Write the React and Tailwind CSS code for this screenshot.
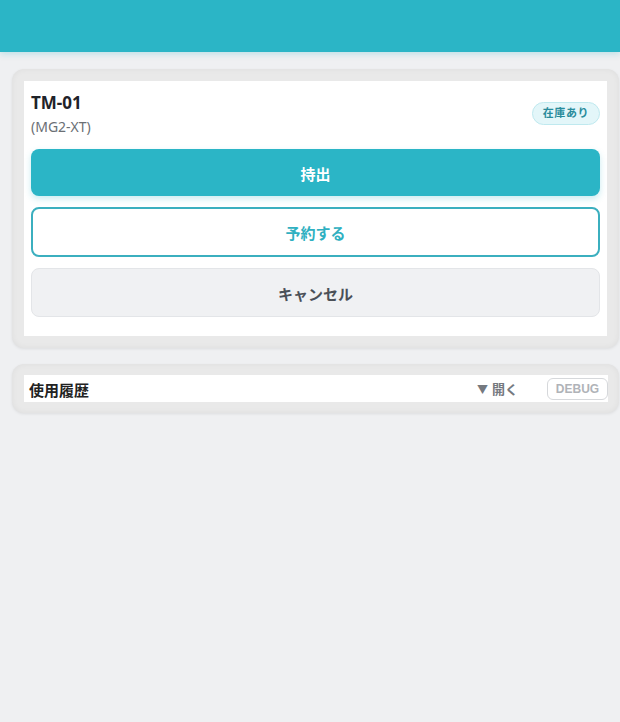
function Header() {
    return <div className="h-[52px] bg-[#2bb5c6] shadow-[0_2px_6px_rgba(43,181,198,0.25)]"></div>;
}

function ItemCard() {
    return (
        <div className="ml-3 w-[607px] rounded-xl bg-[#e9e9e9] p-3 shadow-[0_1px_3px_rgba(0,0,0,0.08),inset_0_0_6px_rgba(0,0,0,0.05)]">
            <div className="bg-white px-[7px] pt-[10px] pb-[19px]">
                <div className="flex items-start justify-between">
                    <div>
                        <div className="text-[17px] font-bold leading-6 text-[#1f2329]">TM-01</div>
                        <div className="text-sm leading-6 text-[#6b6f75]">(MG2-XT)</div>
                    </div>
                    <span className="mt-[11px] flex h-[23px] items-center rounded-full border border-[#bfe9ef] bg-[#e3f6f9] px-[10px] text-[11px] font-bold tracking-wider text-[#2a8c9c]">
                        在庫あり
                    </span>
                </div>
                <div className="mt-[10px] flex flex-col gap-[11px]">
                    <button className="h-[47px] rounded-lg bg-[#2bb5c6] pt-[3px] text-[15px] font-bold text-white shadow-[0_3px_6px_rgba(43,181,198,0.25)]">
                        持出
                    </button>
                    <button className="h-[50px] rounded-lg border-2 border-[#3bafbf] bg-white pt-[3px] text-[15px] font-bold text-[#2fb0c1]">
                        予約する
                    </button>
                    <button className="h-[49px] rounded-lg border border-[#e3e5e8] bg-[#f0f1f3] pt-[3px] text-[15px] font-bold text-[#4b5058]">
                        キャンセル
                    </button>
                </div>
            </div>
        </div>
    );
}

function HistoryCard() {
    return (
        <div className="ml-3 mt-4 w-[607px] rounded-xl bg-[#e9e9e9] p-[11px] pl-3 shadow-[0_1px_3px_rgba(0,0,0,0.08),inset_0_0_6px_rgba(0,0,0,0.05)]">
            <div className="flex h-[27px] items-center justify-between bg-white pl-[5px]">
                <span className="pt-[3px] text-[15px] font-bold text-[#222]">使用履歴</span>
                <div className="flex items-center gap-[29px]">
                    <span className="flex items-center gap-1 pt-[3px] text-[13px] font-bold text-[#75797f]">
                        <span className="text-[11px]">▼</span>
                        開く
                    </span>
                    <span className="flex h-[22px] w-[61px] items-center justify-center rounded-md border border-[#d6d8db] bg-white font-['Liberation_Sans',sans-serif] text-xs font-bold text-[#b0b3b8]">
                        DEBUG
                    </span>
                </div>
            </div>
        </div>
    );
}

export default function App() {
    return (
        <div className="min-h-[722px] bg-[#eff0f2] font-['Noto_Sans','Noto_Sans_CJK_JP',sans-serif]">
            <Header/>
            <div className="pt-[17px]">
                <ItemCard/>
                <HistoryCard/>
            </div>
        </div>
    );
}
